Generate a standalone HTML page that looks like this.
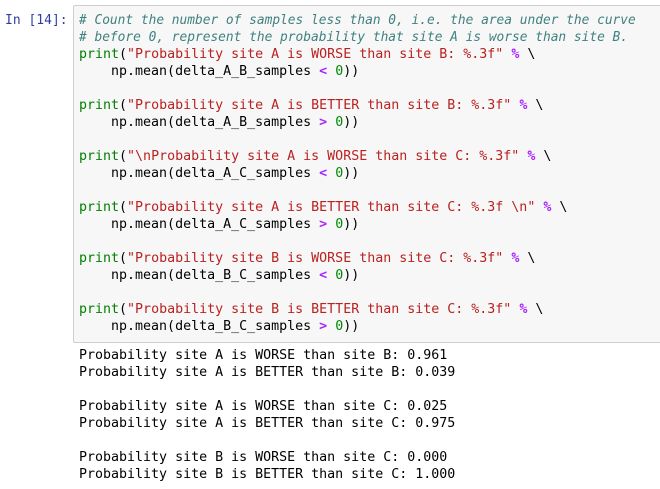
<!DOCTYPE html><html><head><style>
body{margin:0;background:#fff;width:660px;height:489px;overflow:hidden;position:relative;font-family:"DejaVu Sans Mono","Liberation Mono",monospace;font-size:13.3px}
.p{position:absolute;left:5px;top:12px;color:#303f9f;line-height:17px;font-size:13px}
.box{position:absolute;left:73px;top:5px;width:600px;height:336px;background:#f7f7f7;border:1px solid #cfcfcf;border-radius:2px}
pre{margin:0;font:inherit;line-height:17px;white-space:pre}
.code{position:absolute;left:79px;top:12px}
.out{position:absolute;left:79px;top:347px;color:#000}
.c{color:#408080;font-style:italic;font-size:12.85px}.k{color:#008000}.s{color:#ba2121}.o{color:#aa22ff;font-weight:bold}.n{color:#080}
</style></head><body>
<div class="p">In&nbsp;[14]:</div>
<div class="box"></div>
<pre class="code"><span class="c"># Count the number of samples less than 0, i.e. the area under the curve</span>
<span class="c"># before 0, represent the probability that site A is worse than site B.</span>
<span class="k">print</span>(<span class="s">"Probability site A is WORSE than site B: %.3f"</span> <span class="o">%</span> \
    np.mean(delta_A_B_samples <span class="o">&lt;</span> <span class="n">0</span>))

<span class="k">print</span>(<span class="s">"Probability site A is BETTER than site B: %.3f"</span> <span class="o">%</span> \
    np.mean(delta_A_B_samples <span class="o">&gt;</span> <span class="n">0</span>))

<span class="k">print</span>(<span class="s">"\nProbability site A is WORSE than site C: %.3f"</span> <span class="o">%</span> \
    np.mean(delta_A_C_samples <span class="o">&lt;</span> <span class="n">0</span>))

<span class="k">print</span>(<span class="s">"Probability site A is BETTER than site C: %.3f \n"</span> <span class="o">%</span> \
    np.mean(delta_A_C_samples <span class="o">&gt;</span> <span class="n">0</span>))

<span class="k">print</span>(<span class="s">"Probability site B is WORSE than site C: %.3f"</span> <span class="o">%</span> \
    np.mean(delta_B_C_samples <span class="o">&lt;</span> <span class="n">0</span>))

<span class="k">print</span>(<span class="s">"Probability site B is BETTER than site C: %.3f"</span> <span class="o">%</span> \
    np.mean(delta_B_C_samples <span class="o">&gt;</span> <span class="n">0</span>))</pre>
<pre class="out">Probability site A is WORSE than site B: 0.961
Probability site A is BETTER than site B: 0.039

Probability site A is WORSE than site C: 0.025
Probability site A is BETTER than site C: 0.975

Probability site B is WORSE than site C: 0.000
Probability site B is BETTER than site C: 1.000</pre>
</body></html>
